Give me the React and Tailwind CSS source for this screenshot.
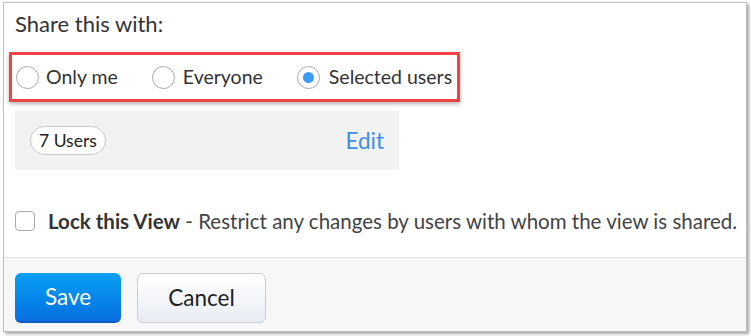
export default function App() {
  return (
    <div className="w-[751px] h-[336px] bg-white pl-[3px] pt-[2px] font-['Lato',sans-serif]">
      <div className="w-[744px] h-[330px] border border-[#bdbdbd] shadow-[2px_2px_3px_rgba(0,0,0,0.35)] flex flex-col bg-white">
        {/* BODY */}
        <div className="flex-1 px-[11px] pt-[6px]">
          <h2 className="text-[22px] leading-[30px] text-[#333]">Share this with:</h2>

          <div className="mt-[13px] ml-[-6px] w-[451px] h-[50px] border-[3px] border-[#ef4444] shadow-[0_2px_4px_rgba(0,0,0,0.3)] flex items-center pl-[4px] text-[19.5px] text-[#333]">
            <label className="flex items-center">
              <span className="w-[23px] h-[23px] rounded-full border border-[#aaa] bg-white" />
              <span className="ml-[7px]">Only me</span>
            </label>
            <label className="flex items-center ml-[34px]">
              <span className="w-[23px] h-[23px] rounded-full border border-[#aaa] bg-white" />
              <span className="ml-[8px]">Everyone</span>
            </label>
            <label className="flex items-center ml-[34px]">
              <span className="w-[23px] h-[23px] rounded-full border border-[#aaa] bg-white flex items-center justify-center">
                <span className="w-[11px] h-[11px] rounded-full bg-[#3b9cf5]" />
              </span>
              <span className="ml-[9px]">Selected users</span>
            </label>
          </div>

          <div className="mt-[9px] w-[384px] h-[59px] bg-[#f2f2f2] flex items-center justify-between pl-[15px] pr-[15px]">
            <span className="h-[29px] px-[8px] rounded-full border border-[#c8c8c8] bg-white text-[17.5px] leading-[27px] text-[#222]">7 Users</span>
            <a className="text-[22.5px] text-[#3d8fe6]">Edit</a>
          </div>

          <div className="mt-[37px] flex items-center whitespace-nowrap">
            <span className="w-[20px] h-[20px] shrink-0 rounded-[4px] border border-[#aaa] bg-white" />
            <p className="ml-[13px] text-[20.5px] leading-[28px] text-[#444]">
              <b className="text-[#333]">Lock this View</b> - Restrict any changes by users with whom the view is shared.
            </p>
          </div>
        </div>

        {/* FOOTER */}
        <div className="h-[74px] border-t border-[#e0e0e0] bg-[#f7f7f7] flex items-start gap-[16px] pl-[11px] pt-[15px]">
          <button className="w-[106px] h-[50px] rounded-[6px] bg-gradient-to-b from-[#0aa0f5] to-[#0a6fe0] border-b-[2px] border-[#0a5cc4] text-white text-[22.5px]">
            Save
          </button>
          <button className="w-[129px] h-[50px] rounded-[6px] bg-gradient-to-b from-white to-[#e8ecf3] border border-[#c9cdd6] text-[#222] text-[22.5px]">
            Cancel
          </button>
        </div>
      </div>
    </div>
  );
}
